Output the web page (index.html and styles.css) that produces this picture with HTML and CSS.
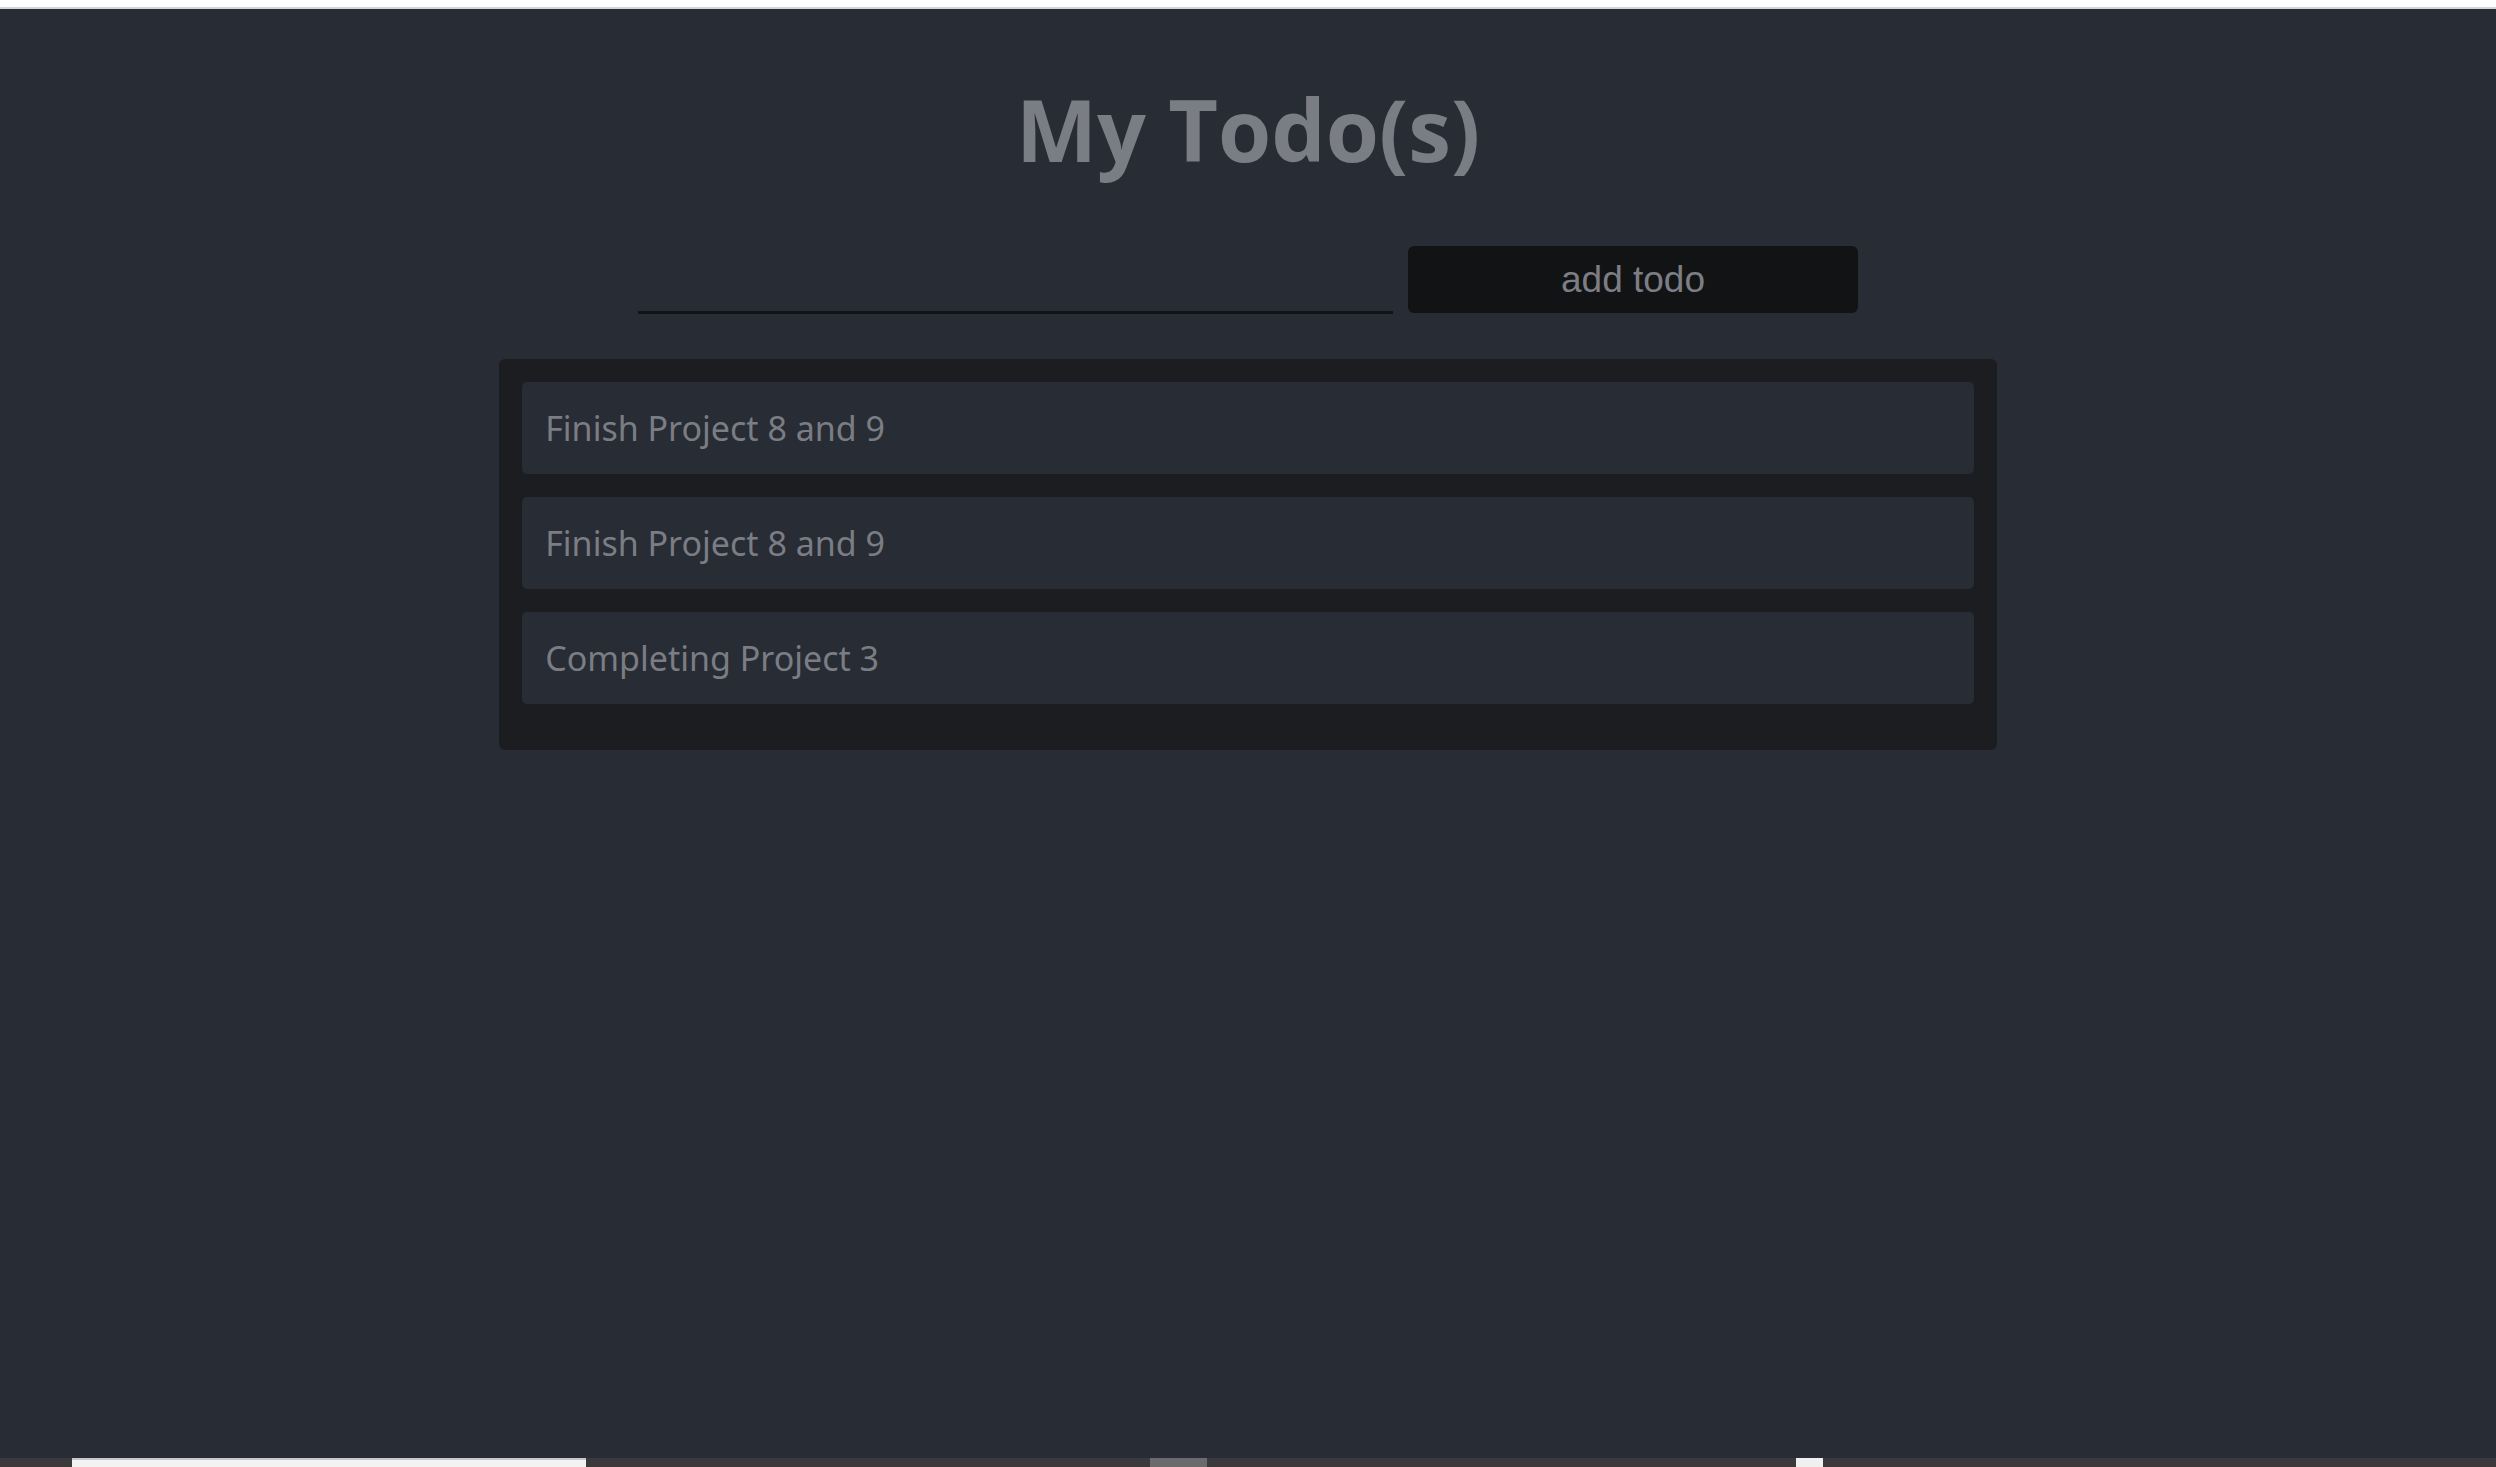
FILE: index.html
```html
<!DOCTYPE html>
<html lang="en">
<head>
<meta charset="utf-8">
<title>My Todo(s)</title>
<link rel="stylesheet" href="styles.css">
</head>
<body>
<div class="topbar"></div>
<main class="app">
  <h1 class="title">My Todo(s)</h1>
  <form class="add-form" onsubmit="return false">
    <input class="todo-input" type="text" aria-label="New todo">
    <button class="add-btn" type="submit">add todo</button>
  </form>
  <ul class="todo-list">
    <li class="todo-item">Finish Project 8 and 9</li>
    <li class="todo-item">Finish Project 8 and 9</li>
    <li class="todo-item">Completing Project 3</li>
  </ul>
</main>
<div class="bottombar">
  <div class="bb-white"></div>
  <div class="bb-gray"></div>
  <div class="bb-small"></div>
</div>
</body>
</html>
```

FILE: styles.css
```css
html, body {
  margin: 0;
  padding: 0;
}
body {
  background: #282c34;
  font-family: "Noto Sans", "Open Sans", sans-serif;
  height: 1467px;
  display: flex;
  flex-direction: column;
  overflow: hidden;
}
.topbar {
  height: 7px;
  background: #ffffff;
  border-bottom: 2px solid #d4d4d4;
  flex: none;
}
.app {
  flex: 1;
  display: flex;
  flex-direction: column;
  align-items: center;
}
.title {
  margin: 77px 0 0;
  font-family: "Open Sans", "Noto Sans", sans-serif;
  font-weight: 700;
  font-size: 86px;
  line-height: 1;
  color: #7b7d85;
}
.add-form {
  margin-top: 74px;
  display: flex;
  align-items: flex-end;
  gap: 15px;
}
.todo-input {
  width: 755px;
  height: 40px;
  box-sizing: border-box;
  background: transparent;
  border: none;
  border-bottom: 3px solid #111318;
  outline: none;
  margin-bottom: -1px;
  color: #7b7d84;
  font-size: 30px;
}
.add-btn {
  width: 450px;
  height: 67px;
  background: #111315;
  border: none;
  border-radius: 6px;
  color: #7d7e84;
  font-family: "Liberation Sans", Arial, sans-serif;
  font-size: 37px;
  padding: 0;
}
.todo-list {
  list-style: none;
  margin: 46px 0 0;
  width: 60%;
  box-sizing: border-box;
  padding: 23px 23px 23px;
  background: #1b1d21;
  border-radius: 6px;
}
.todo-item {
  height: 92px;
  margin-bottom: 23px;
  background: #282c34;
  border-radius: 5px;
  display: flex;
  align-items: center;
  padding-left: 23px;
  color: #7b7d84;
  font-family: "Noto Sans", "Open Sans", sans-serif;
  font-size: 34px;
}
.bottombar {
  height: 9px;
  flex: none;
  background: #3b393b;
  display: flex;
}
.bb-white {
  margin-left: 72px;
  width: 514px;
  background: #f3f3f3;
  border-top: 2px solid #c8c8c8;
}
.bb-gray {
  margin-left: 564px;
  width: 57px;
  background: #6b6b6d;
}
.bb-small {
  margin-left: 589px;
  width: 27px;
  background: #f0f0f0;
}
```
